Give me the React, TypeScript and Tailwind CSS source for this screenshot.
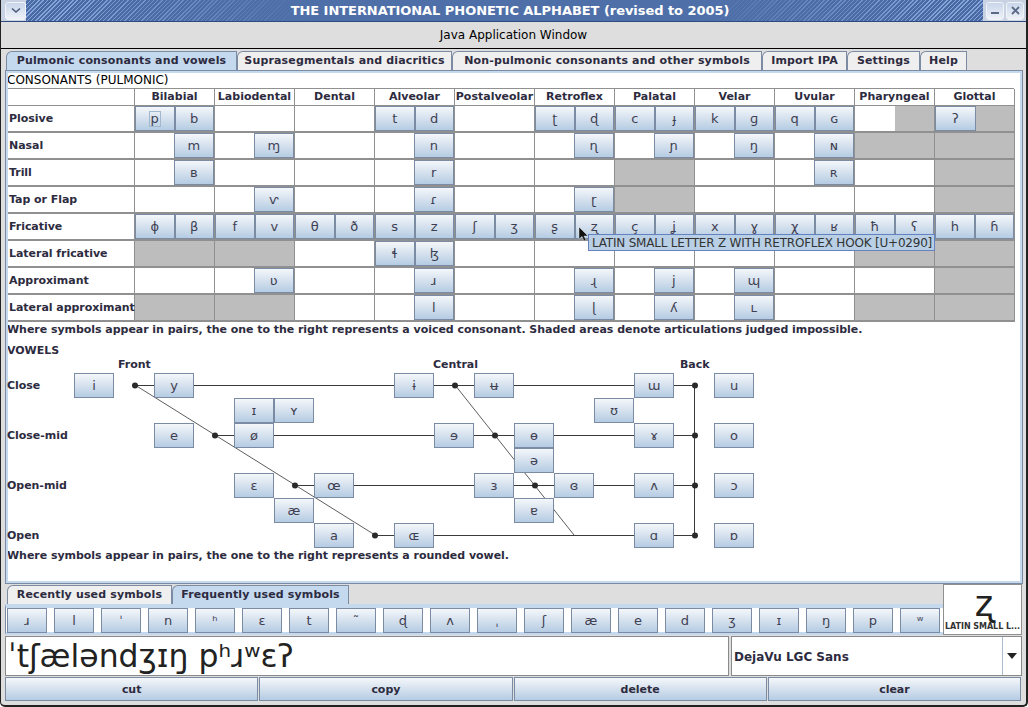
import { Fragment } from 'react';
import type { ReactNode } from 'react';

// one half cell per symbol: '' is empty, '#' is shaded
const COLUMNS = ['Bilabial', 'Labiodental', 'Dental', 'Alveolar', 'Postalveolar', 'Retroflex', 'Palatal', 'Velar', 'Uvular', 'Pharyngeal', 'Glottal'];

const ROWS: { name: string; cells: string[] }[] = [
  { name: 'Plosive', cells: ['p', 'b', '', '', '', '', 't', 'd', '', '', 'ʈ', 'ɖ', 'c', 'ɟ', 'k', 'ɡ', 'q', 'ɢ', '', '#', 'ʔ', '#'] },
  { name: 'Nasal', cells: ['', 'm', '', 'ɱ', '', '', '', 'n', '', '', '', 'ɳ', '', 'ɲ', '', 'ŋ', '', 'ɴ', '#', '#', '#', '#'] },
  { name: 'Trill', cells: ['', 'ʙ', '', '', '', '', '', 'r', '', '', '', '', '#', '#', '', '', '', 'ʀ', '', '', '#', '#'] },
  { name: 'Tap or Flap', cells: ['', '', '', 'ⱱ', '', '', '', 'ɾ', '', '', '', 'ɽ', '#', '#', '', '', '', '', '', '', '#', '#'] },
  { name: 'Fricative', cells: ['ɸ', 'β', 'f', 'v', 'θ', 'ð', 's', 'z', 'ʃ', 'ʒ', 'ʂ', 'ʐ', 'ç', 'ʝ', 'x', 'ɣ', 'χ', 'ʁ', 'ħ', 'ʕ', 'h', 'ɦ'] },
  { name: 'Lateral fricative', cells: ['#', '#', '#', '#', '', '', 'ɬ', 'ɮ', '', '', '', '', '', '', '', '', '', '', '#', '#', '#', '#'] },
  { name: 'Approximant', cells: ['', '', '', 'ʋ', '', '', '', 'ɹ', '', '', '', 'ɻ', '', 'j', '', 'ɰ', '', '', '', '', '#', '#'] },
  { name: 'Lateral approximant', cells: ['#', '#', '#', '#', '', '', '', 'l', '', '', '', 'ɭ', '', 'ʎ', '', 'ʟ', '', '', '#', '#', '#', '#'] },
];

// page coordinates of the vowel buttons
const VOWELS: [string, number, number][] = [
  ['i', 74, 373], ['y', 154, 373], ['ɨ', 394, 373], ['ʉ', 474, 373], ['ɯ', 634, 373], ['u', 714, 373],
  ['ɪ', 234, 398], ['ʏ', 274, 398], ['ʊ', 594, 398],
  ['e', 154, 423], ['ø', 234, 423], ['ɘ', 434, 423], ['ɵ', 514, 423], ['ɤ', 634, 423], ['o', 714, 423],
  ['ə', 514, 448],
  ['ɛ', 234, 473], ['œ', 314, 473], ['ɜ', 474, 473], ['ɞ', 554, 473], ['ʌ', 634, 473], ['ɔ', 714, 473],
  ['æ', 274, 498], ['ɐ', 514, 498],
  ['a', 314, 523], ['ɶ', 394, 523], ['ɑ', 634, 523], ['ɒ', 714, 523],
];

const VOWEL_DOTS = [[135, 385], [455, 385], [695, 385], [215, 435], [495, 435], [695, 435], [295, 485], [535, 485], [695, 485], [375, 535], [695, 535]];

const RECENT = ['ɹ', 'l', 'ˈ', 'n', 'ʰ', 'ɛ', 't', '˜', 'ɖ', 'ʌ', 'ˌ', 'ʃ', 'æ', 'e', 'd', 'ʒ', 'ɪ', 'ŋ', 'p', 'ʷ'];

const BUTTON = 'border border-[#7a8ba3] bg-gradient-to-b from-[#f4f7fa] via-[#d5e1ee] to-[#b5cce3] flex items-center justify-center';

function Key({ symbol, focused, className = '' }: { symbol: string; focused?: boolean; className?: string }) {
  return (
    <div className={`${BUTTON} font-normal text-[13px] leading-none tracking-normal text-[#3f3f52] ${className}`}>
      {focused ? <span className="px-[1px] h-[16px] flex items-center border border-[#a3b8cc]">{symbol}</span> : symbol}
    </div>
  );
}

function Tab({ label, active, className }: { label: string; active?: boolean; className: string }) {
  return (
    <div className={`h-full flex items-center justify-center whitespace-nowrap tracking-[0.15px] rounded-tl-[6px] border border-b-0 border-[#7a8ba3] ${active ? 'bg-[#c4d8ee]' : 'bg-[#efefef]'} ${className}`}>
      {label}
    </div>
  );
}

function TitleButton({ children, className = '' }: { children: ReactNode; className?: string }) {
  return (
    <div className={`h-[18px] rounded-[3px] border border-[#f0f3f8] bg-gradient-to-b from-[#c9d6ea] to-[#eef2f8] flex items-center justify-center ${className}`}>
      {children}
    </div>
  );
}

export default function App() {
  return (
    <div className="w-[1028px] h-[707px] overflow-hidden relative bg-[#dedede] font-['DejaVu_Sans',sans-serif] text-[11px] font-bold tracking-[-0.04px] text-[#2d2b40] rounded-b-[5px] border-l border-r-2 border-b-2 border-[#222]">
      {/* title bar */}
      <div className="h-[22px] flex items-stretch border-b border-[#2f4a7d] bg-[#c9d2e2]">
        <div className="w-[25px] pl-[4px] flex items-center">
          <TitleButton className="w-[21px]">
            <svg width="10" height="7" viewBox="0 0 10 7"><path d="M1 1.5 L5 5 L9 1.5" fill="none" stroke="#4a5c7c" strokeWidth="1.6" /></svg>
          </TitleButton>
        </div>
        <div className="flex-1 pl-[11px] flex items-center justify-center text-white text-[13px] tracking-[-0.05px] bg-[linear-gradient(90deg,transparent_4%,#4f6fa9_30%,#4f6fa9_70%,transparent_96%),repeating-linear-gradient(135deg,#86a5d8_0px,#86a5d8_1px,#4a6aa6_1px,#4a6aa6_3px),linear-gradient(#5577b3,#4a6aa6)]">
          THE INTERNATIONAL PHONETIC ALPHABET (revised to 2005)
        </div>
        <div className="w-[43px] flex items-center gap-[2px]">
          <TitleButton className="w-[18px] ml-[3px]">
            <div className="w-[8px] h-[2px] mt-[4px] bg-[#5a6a86]" />
          </TitleButton>
          <TitleButton className="w-[18px]">
            <svg width="9" height="9" viewBox="0 0 9 9"><path d="M1 1 L8 8 M8 1 L1 8" fill="none" stroke="#5a6a86" strokeWidth="1.8" /></svg>
          </TitleButton>
        </div>
      </div>

      {/* java window caption */}
      <div className="h-[27px] border-b border-black flex items-center justify-center font-normal text-[12px] tracking-normal text-black">Java Application Window</div>

      {/* main tabs */}
      <div className="h-[19px] mt-[2px] pl-[5px] flex">
        <Tab active label="Pulmonic consonants and vowels" className="w-[231px]" />
        <Tab label="Suprasegmentals and diacritics" className="w-[215px]" />
        <Tab label="Non-pulmonic consonants and other symbols" className="w-[310px]" />
        <Tab label="Import IPA" className="w-[85px]" />
        <Tab label="Settings" className="w-[73px]" />
        <Tab label="Help" className="w-[47px]" />
      </div>

      {/* main panel */}
      <div className="ml-[4px] w-[1018px] h-[514px] border border-[#7a8ba3] bg-white outline-[2px] outline-[#c4d8ee] -outline-offset-[3px] pl-[1px] pt-[2px]">
        <div className="h-[15px] leading-[15px] font-normal text-[12px] tracking-normal text-black">CONSONANTS (PULMONIC)</div>

        {/* consonant table */}
        <div className="w-[1007px] grid grid-cols-[127px_repeat(11,80px)] grid-rows-[17px_repeat(8,27px)] border-l border-t border-[#909090]">
          <div className="border-r border-b border-[#909090]" />
          {COLUMNS.map((col) => (
            <div key={col} className="border-r border-b border-[#909090] flex items-center justify-center tracking-normal">{col}</div>
          ))}
          {ROWS.map((row) => (
            <Fragment key={row.name}>
              <div className="border-r border-b-2 border-[#909090] pl-[1px] pt-[1px] flex items-center whitespace-nowrap">{row.name}</div>
              {COLUMNS.map((col, c) => (
                <div key={col} className="border-r border-b-2 border-[#909090] flex">
                  {[row.cells[c * 2], row.cells[c * 2 + 1]].map((sym, i) => (
                    sym === '#' ? <div key={i} className="flex-1 bg-[#bdbdbd]" />
                      : sym ? <Key key={i} symbol={sym} focused={sym === 'p'} className="flex-1" />
                        : <div key={i} className="flex-1" />
                  ))}
                </div>
              ))}
            </Fragment>
          ))}
        </div>

        <div className="h-[15px] leading-[15px] whitespace-nowrap">Where symbols appear in pairs, the one to the right represents a voiced consonant. Shaded areas denote articulations judged impossible.</div>
        <div className="h-[15px] mt-[6px] leading-[15px]">VOWELS</div>

        {/* vowel chart, free canvas in page coordinates */}
        <div className="relative h-[190px]">
          <svg className="absolute top-[-358px] left-[-7px]" width="1028" height="707">
            <path d="M135 385.5 H695 M215 435.5 H695 M295 485.5 H695 M375 535.5 H695 M694.5 385 V535" stroke="#3a3a3a" strokeWidth="1" fill="none" />
            <path d="M135 385 L375 535 M455 385 L574 535" stroke="#333" strokeWidth="0.8" fill="none" />
            {VOWEL_DOTS.map(([x, y]) => <circle key={`${x}-${y}`} cx={x} cy={y + 0.5} r="3" fill="#2a2a2a" />)}
          </svg>
          {VOWELS.map(([sym, x, y]) => (
            <div key={sym} className="absolute" style={{ left: x - 7, top: y - 358 }}>
              <Key symbol={sym} className="w-[40px] h-[25px]" />
            </div>
          ))}
          {[['Front', 118], ['Central', 433], ['Back', 680]].map(([t, x]) => (
            <div key={t} className="absolute top-[-1px] leading-[15px]" style={{ left: Number(x) - 7 }}>{t}</div>
          ))}
          {[['Close', 378], ['Close-mid', 428], ['Open-mid', 478], ['Open', 528]].map(([t, y]) => (
            <div key={t} className="absolute left-0 leading-[15px]" style={{ top: Number(y) - 358 }}>{t}</div>
          ))}
        </div>
        <div className="h-[15px] leading-[15px] whitespace-nowrap">Where symbols appear in pairs, the one to the right represents a rounded vowel.</div>
      </div>

      {/* recent symbols + preview */}
      <div className="flex h-[52px]">
        <div className="ml-[4px] w-[938px] flex flex-col">
          <div className="h-[19px] pl-[2px] flex mt-[1px]">
            <Tab label="Recently used symbols" className="w-[165px] pt-[1px]" />
            <Tab active label="Frequently used symbols" className="w-[177px] pt-[1px]" />
          </div>
          <div className="h-[31px] bg-white border-t-[4px] border-b-[3px] border-[#c4d8ee] border-l border-l-[#7a8ba3] pl-[1px] flex gap-[7px]">
            {RECENT.map((s, i) => <Key key={i} symbol={s} className="w-[40px] h-[25px] shrink-0" />)}
          </div>
        </div>
        <div className="w-[79px] h-[51px] border border-[#909090] bg-white flex flex-col items-center">
          <div className="h-[36px] pl-[3px] text-[35px] leading-[38px] font-normal text-[#222]">ʐ</div>
          <div className="text-[8px] whitespace-nowrap text-[#333]">LATIN SMALL L...</div>
        </div>
      </div>

      {/* text field + font combo */}
      <div className="h-[40px] flex">
        <div className="ml-[4px] w-[724px] border border-[#8a8a8a] bg-white flex items-center pl-[2px] pt-[2px] text-[31.5px] font-normal tracking-normal text-[#222] whitespace-nowrap">ˈtʃæləndʒɪŋ pʰɹʷɛʔ</div>
        <div className="ml-[2px] w-[291px] border border-[#8a8a8a] bg-white flex">
          <div className="flex-1 border-r border-[#a9bcd0] flex items-center pl-[2px] pt-[1px] text-[12px] tracking-normal">DejaVu LGC Sans</div>
          <div className="w-[18px] flex items-center justify-center">
            <svg width="10" height="6" viewBox="0 0 10 6"><path d="M0 0 H10 L5 6 Z" fill="#222" /></svg>
          </div>
        </div>
      </div>

      {/* edit buttons */}
      <div className="mt-[1px] ml-[4px] flex gap-[1px] h-[24px] w-[1016px]">
        {['cut', 'copy', 'delete', 'clear'].map((label) => (
          <div key={label} className={`${BUTTON} flex-1 pt-[2px]`}>{label}</div>
        ))}
      </div>

      {/* tooltip and pointer over the table */}
      <div className="absolute left-[587px] top-[234px] w-[347px] h-[17px] bg-[#b8cfe5] border border-[#6382bf] pl-[3px] flex items-center font-normal text-[12px] tracking-[-0.2px] text-[#333] whitespace-nowrap">LATIN SMALL LETTER Z WITH RETROFLEX HOOK [U+0290]</div>
      <svg className="absolute left-[577px] top-[227px]" width="12" height="16" viewBox="0 0 12 16">
        <path d="M1 0 V12 L4 9.5 L6 14 L8 13 L6 9 H10 Z" fill="#111" stroke="#fff" strokeWidth="0.4" />
      </svg>
    </div>
  );
}
